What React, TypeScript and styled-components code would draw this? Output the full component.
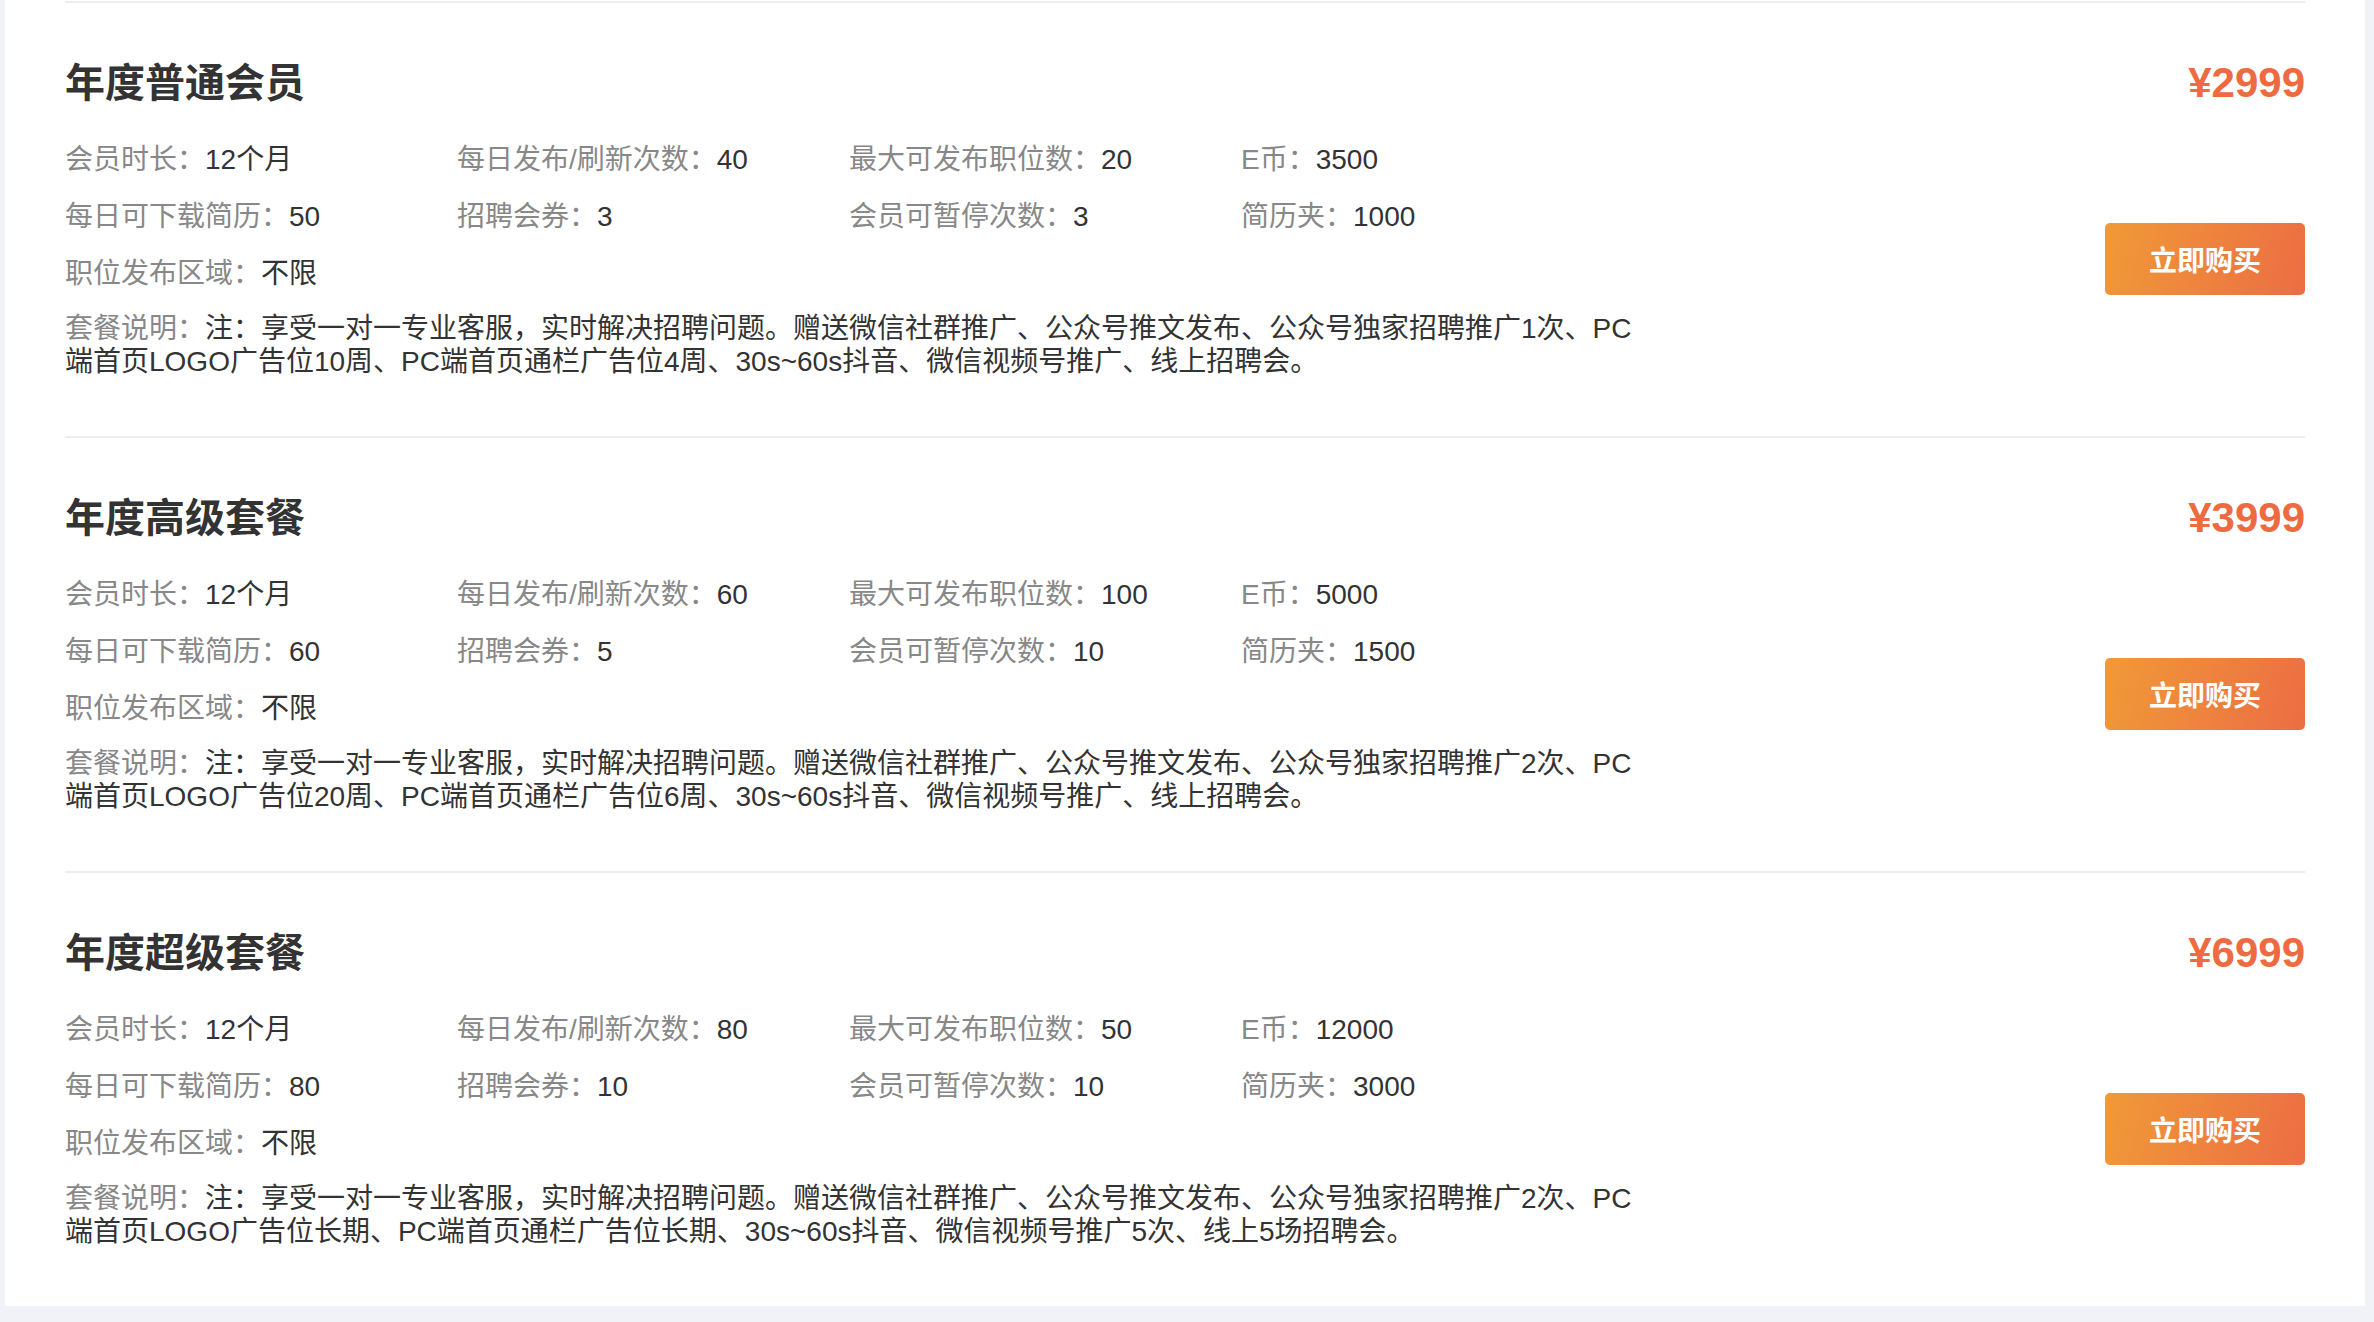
import React from 'react';
import styled, { createGlobalStyle } from 'styled-components';

const FONT = `"Liberation Sans", "Noto Sans CJK SC", sans-serif`;

const GlobalStyle = createGlobalStyle`
  * {
    box-sizing: border-box;
  }

  body {
    margin: 0;
    background-color: #f0f2f7;
    font-family: ${FONT};
  }
`;

type Plan = {
  name: string;
  price: string;
  duration: string;
  dailyRefresh: number;
  maxJobs: number;
  coins: number;
  dailyDownload: number;
  fairTickets: number;
  pauseTimes: number;
  resumeFolder: number;
  area: string;
  note: string;
};

const PLANS: Plan[] = [
  {
    name: '年度普通会员',
    price: '¥2999',
    duration: '12个月',
    dailyRefresh: 40,
    maxJobs: 20,
    coins: 3500,
    dailyDownload: 50,
    fairTickets: 3,
    pauseTimes: 3,
    resumeFolder: 1000,
    area: '不限',
    note: '注：享受一对一专业客服，实时解决招聘问题。赠送微信社群推广、公众号推文发布、公众号独家招聘推广1次、PC端首页LOGO广告位10周、PC端首页通栏广告位4周、30s~60s抖音、微信视频号推广、线上招聘会。',
  },
  {
    name: '年度高级套餐',
    price: '¥3999',
    duration: '12个月',
    dailyRefresh: 60,
    maxJobs: 100,
    coins: 5000,
    dailyDownload: 60,
    fairTickets: 5,
    pauseTimes: 10,
    resumeFolder: 1500,
    area: '不限',
    note: '注：享受一对一专业客服，实时解决招聘问题。赠送微信社群推广、公众号推文发布、公众号独家招聘推广2次、PC端首页LOGO广告位20周、PC端首页通栏广告位6周、30s~60s抖音、微信视频号推广、线上招聘会。',
  },
  {
    name: '年度超级套餐',
    price: '¥6999',
    duration: '12个月',
    dailyRefresh: 80,
    maxJobs: 50,
    coins: 12000,
    dailyDownload: 80,
    fairTickets: 10,
    pauseTimes: 10,
    resumeFolder: 3000,
    area: '不限',
    note: '注：享受一对一专业客服，实时解决招聘问题。赠送微信社群推广、公众号推文发布、公众号独家招聘推广2次、PC端首页LOGO广告位长期、PC端首页通栏广告位长期、30s~60s抖音、微信视频号推广5次、线上5场招聘会。',
  },
];

const Page = styled.div`
  padding: 0 9px 16px 5px;
`;

const Panel = styled.section`
  background-color: #ffffff;
  padding-top: 1px;
`;

const PlanItem = styled.div`
  margin: 0 60px;
  padding: 52px 0 58px;
  border-top: 2px solid #eeeeee;
`;

const Header = styled.div`
  display: flex;
  justify-content: space-between;
  align-items: center;
`;

const Title = styled.h2`
  margin: 0;
  font-size: 40px;
  line-height: 56px;
  font-weight: bold;
  color: #333333;
`;

const Price = styled.span`
  font-size: 42px;
  line-height: 56px;
  font-weight: bold;
  color: #ee6a40;
`;

const Body = styled.div`
  display: flex;
  justify-content: space-between;
  align-items: center;
  margin-top: 29px;
`;

const Info = styled.div`
  width: 1580px;
`;

const Specs = styled.div`
  display: grid;
  grid-template-columns: repeat(4, 392px);
  row-gap: 17px;
`;

const Spec = styled.div`
  font-size: 28px;
  line-height: 40px;
  color: #333333;
  white-space: nowrap;
`;

const Label = styled.span`
  color: #888888;
`;

const Note = styled.p`
  margin: 18px 0 0;
  font-size: 28px;
  line-height: 33px;
  color: #333333;
`;

const BuyButton = styled.button`
  width: 200px;
  height: 72px;
  border: none;
  border-radius: 5px;
  background: linear-gradient(105deg, #f09a37 0%, #ec6d44 100%);
  color: #ffffff;
  font-family: ${FONT};
  font-size: 28px;
  font-weight: bold;
  cursor: pointer;
  flex-shrink: 0;
`;

const PlanCard: React.FC<{ plan: Plan }> = ({ plan }) => {
  return (
    <PlanItem>
      <Header>
        <Title>{plan.name}</Title>
        <Price>{plan.price}</Price>
      </Header>
      <Body>
        <Info>
          <Specs>
            <Spec>
              <Label>会员时长：</Label>
              {plan.duration}
            </Spec>
            <Spec>
              <Label>每日发布/刷新次数：</Label>
              {plan.dailyRefresh}
            </Spec>
            <Spec>
              <Label>最大可发布职位数：</Label>
              {plan.maxJobs}
            </Spec>
            <Spec>
              <Label>E币：</Label>
              {plan.coins}
            </Spec>
            <Spec>
              <Label>每日可下载简历：</Label>
              {plan.dailyDownload}
            </Spec>
            <Spec>
              <Label>招聘会券：</Label>
              {plan.fairTickets}
            </Spec>
            <Spec>
              <Label>会员可暂停次数：</Label>
              {plan.pauseTimes}
            </Spec>
            <Spec>
              <Label>简历夹：</Label>
              {plan.resumeFolder}
            </Spec>
            <Spec>
              <Label>职位发布区域：</Label>
              {plan.area}
            </Spec>
          </Specs>
          <Note>
            <Label>套餐说明：</Label>
            {plan.note}
          </Note>
        </Info>
        <BuyButton>立即购买</BuyButton>
      </Body>
    </PlanItem>
  );
};

const App: React.FC = () => {
  return (
    <Page>
      <GlobalStyle />
      <Panel>
        {PLANS.map((plan) => (
          <PlanCard key={plan.name} plan={plan} />
        ))}
      </Panel>
    </Page>
  );
};

export default App;
